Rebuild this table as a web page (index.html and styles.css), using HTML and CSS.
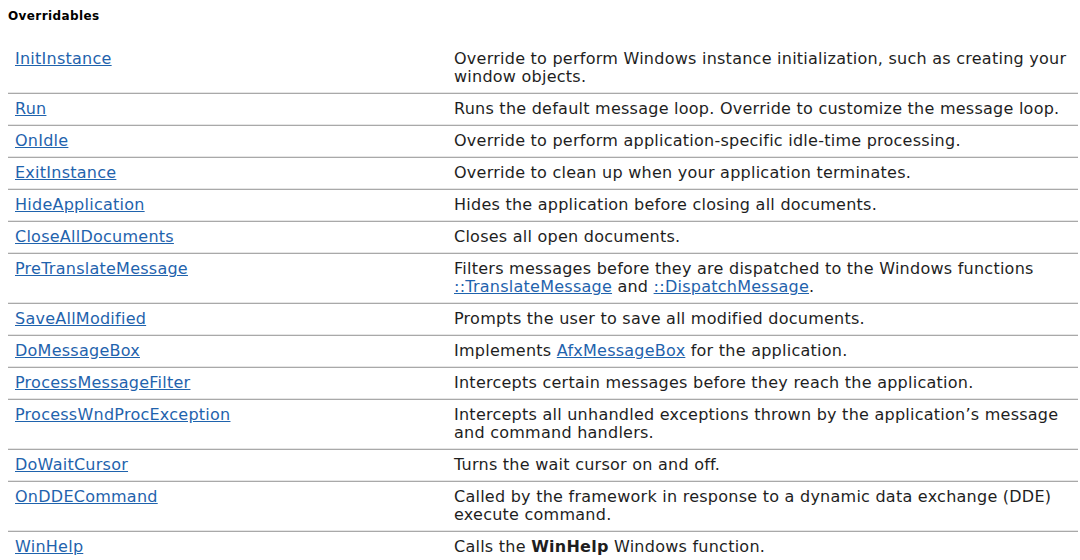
FILE: index.html
```html
<!DOCTYPE html>
<html>
<head>
<meta charset="utf-8">
<link rel="stylesheet" href="styles.css">
</head>
<body>
<h4 class="title">Overridables</h4>
<table class="members">
<tbody>
<tr><td class="name"><a href="#">InitInstance</a></td><td class="desc">Override to perform Windows instance initialization, such as creating your window objects.</td></tr>
<tr><td class="name"><a href="#">Run</a></td><td class="desc">Runs the default message loop. Override to customize the message loop.</td></tr>
<tr><td class="name"><a href="#">OnIdle</a></td><td class="desc">Override to perform application-specific idle-time processing.</td></tr>
<tr><td class="name"><a href="#">ExitInstance</a></td><td class="desc">Override to clean up when your application terminates.</td></tr>
<tr><td class="name"><a href="#">HideApplication</a></td><td class="desc">Hides the application before closing all documents.</td></tr>
<tr><td class="name"><a href="#">CloseAllDocuments</a></td><td class="desc">Closes all open documents.</td></tr>
<tr><td class="name"><a href="#">PreTranslateMessage</a></td><td class="desc">Filters messages before they are dispatched to the Windows functions <a href="#">::TranslateMessage</a> and <a href="#">::DispatchMessage</a>.</td></tr>
<tr><td class="name"><a href="#">SaveAllModified</a></td><td class="desc">Prompts the user to save all modified documents.</td></tr>
<tr><td class="name"><a href="#">DoMessageBox</a></td><td class="desc">Implements <a href="#">AfxMessageBox</a> for the application.</td></tr>
<tr><td class="name"><a href="#">ProcessMessageFilter</a></td><td class="desc">Intercepts certain messages before they reach the application.</td></tr>
<tr><td class="name"><a href="#">ProcessWndProcException</a></td><td class="desc">Intercepts all unhandled exceptions thrown by the application’s message and command handlers.</td></tr>
<tr><td class="name"><a href="#">DoWaitCursor</a></td><td class="desc">Turns the wait cursor on and off.</td></tr>
<tr><td class="name"><a href="#">OnDDECommand</a></td><td class="desc">Called by the framework in response to a dynamic data exchange (DDE) execute command.</td></tr>
<tr><td class="name"><a href="#">WinHelp</a></td><td class="desc">Calls the <b>WinHelp</b> Windows function.</td></tr>
</tbody>
</table>
</body>
</html>
```
FILE: styles.css
```css
html, body {
  margin: 0;
  padding: 0;
  background: #ffffff;
}
body {
  padding: 0 2px 0 8px;
  font-family: "DejaVu Sans", Verdana, sans-serif;
  color: #1e1e1e;
}
.title {
  margin: 0;
  padding-top: 9px;
  font-size: 12px;
  line-height: 14px;
  letter-spacing: 0.4px;
  font-weight: bold;
  color: #000;
}
.members {
  margin-top: 21px;
  width: 1070px;
  border-collapse: collapse;
  font-size: 16px;
  line-height: 18px;
  letter-spacing: 0.25px;
}
.members td {
  vertical-align: top;
  padding: 6px 7px 7px 7px;
  border-bottom: 1px solid #a9a9a9;
  box-shadow: inset 0 -1px 0 #e6e6e6;
}
.members tr:last-child td {
  border-bottom: none;
  box-shadow: none;
}
.members td.name {
  width: 425px;
}
a {
  color: #1f63ad;
  text-decoration: underline;
}
```
